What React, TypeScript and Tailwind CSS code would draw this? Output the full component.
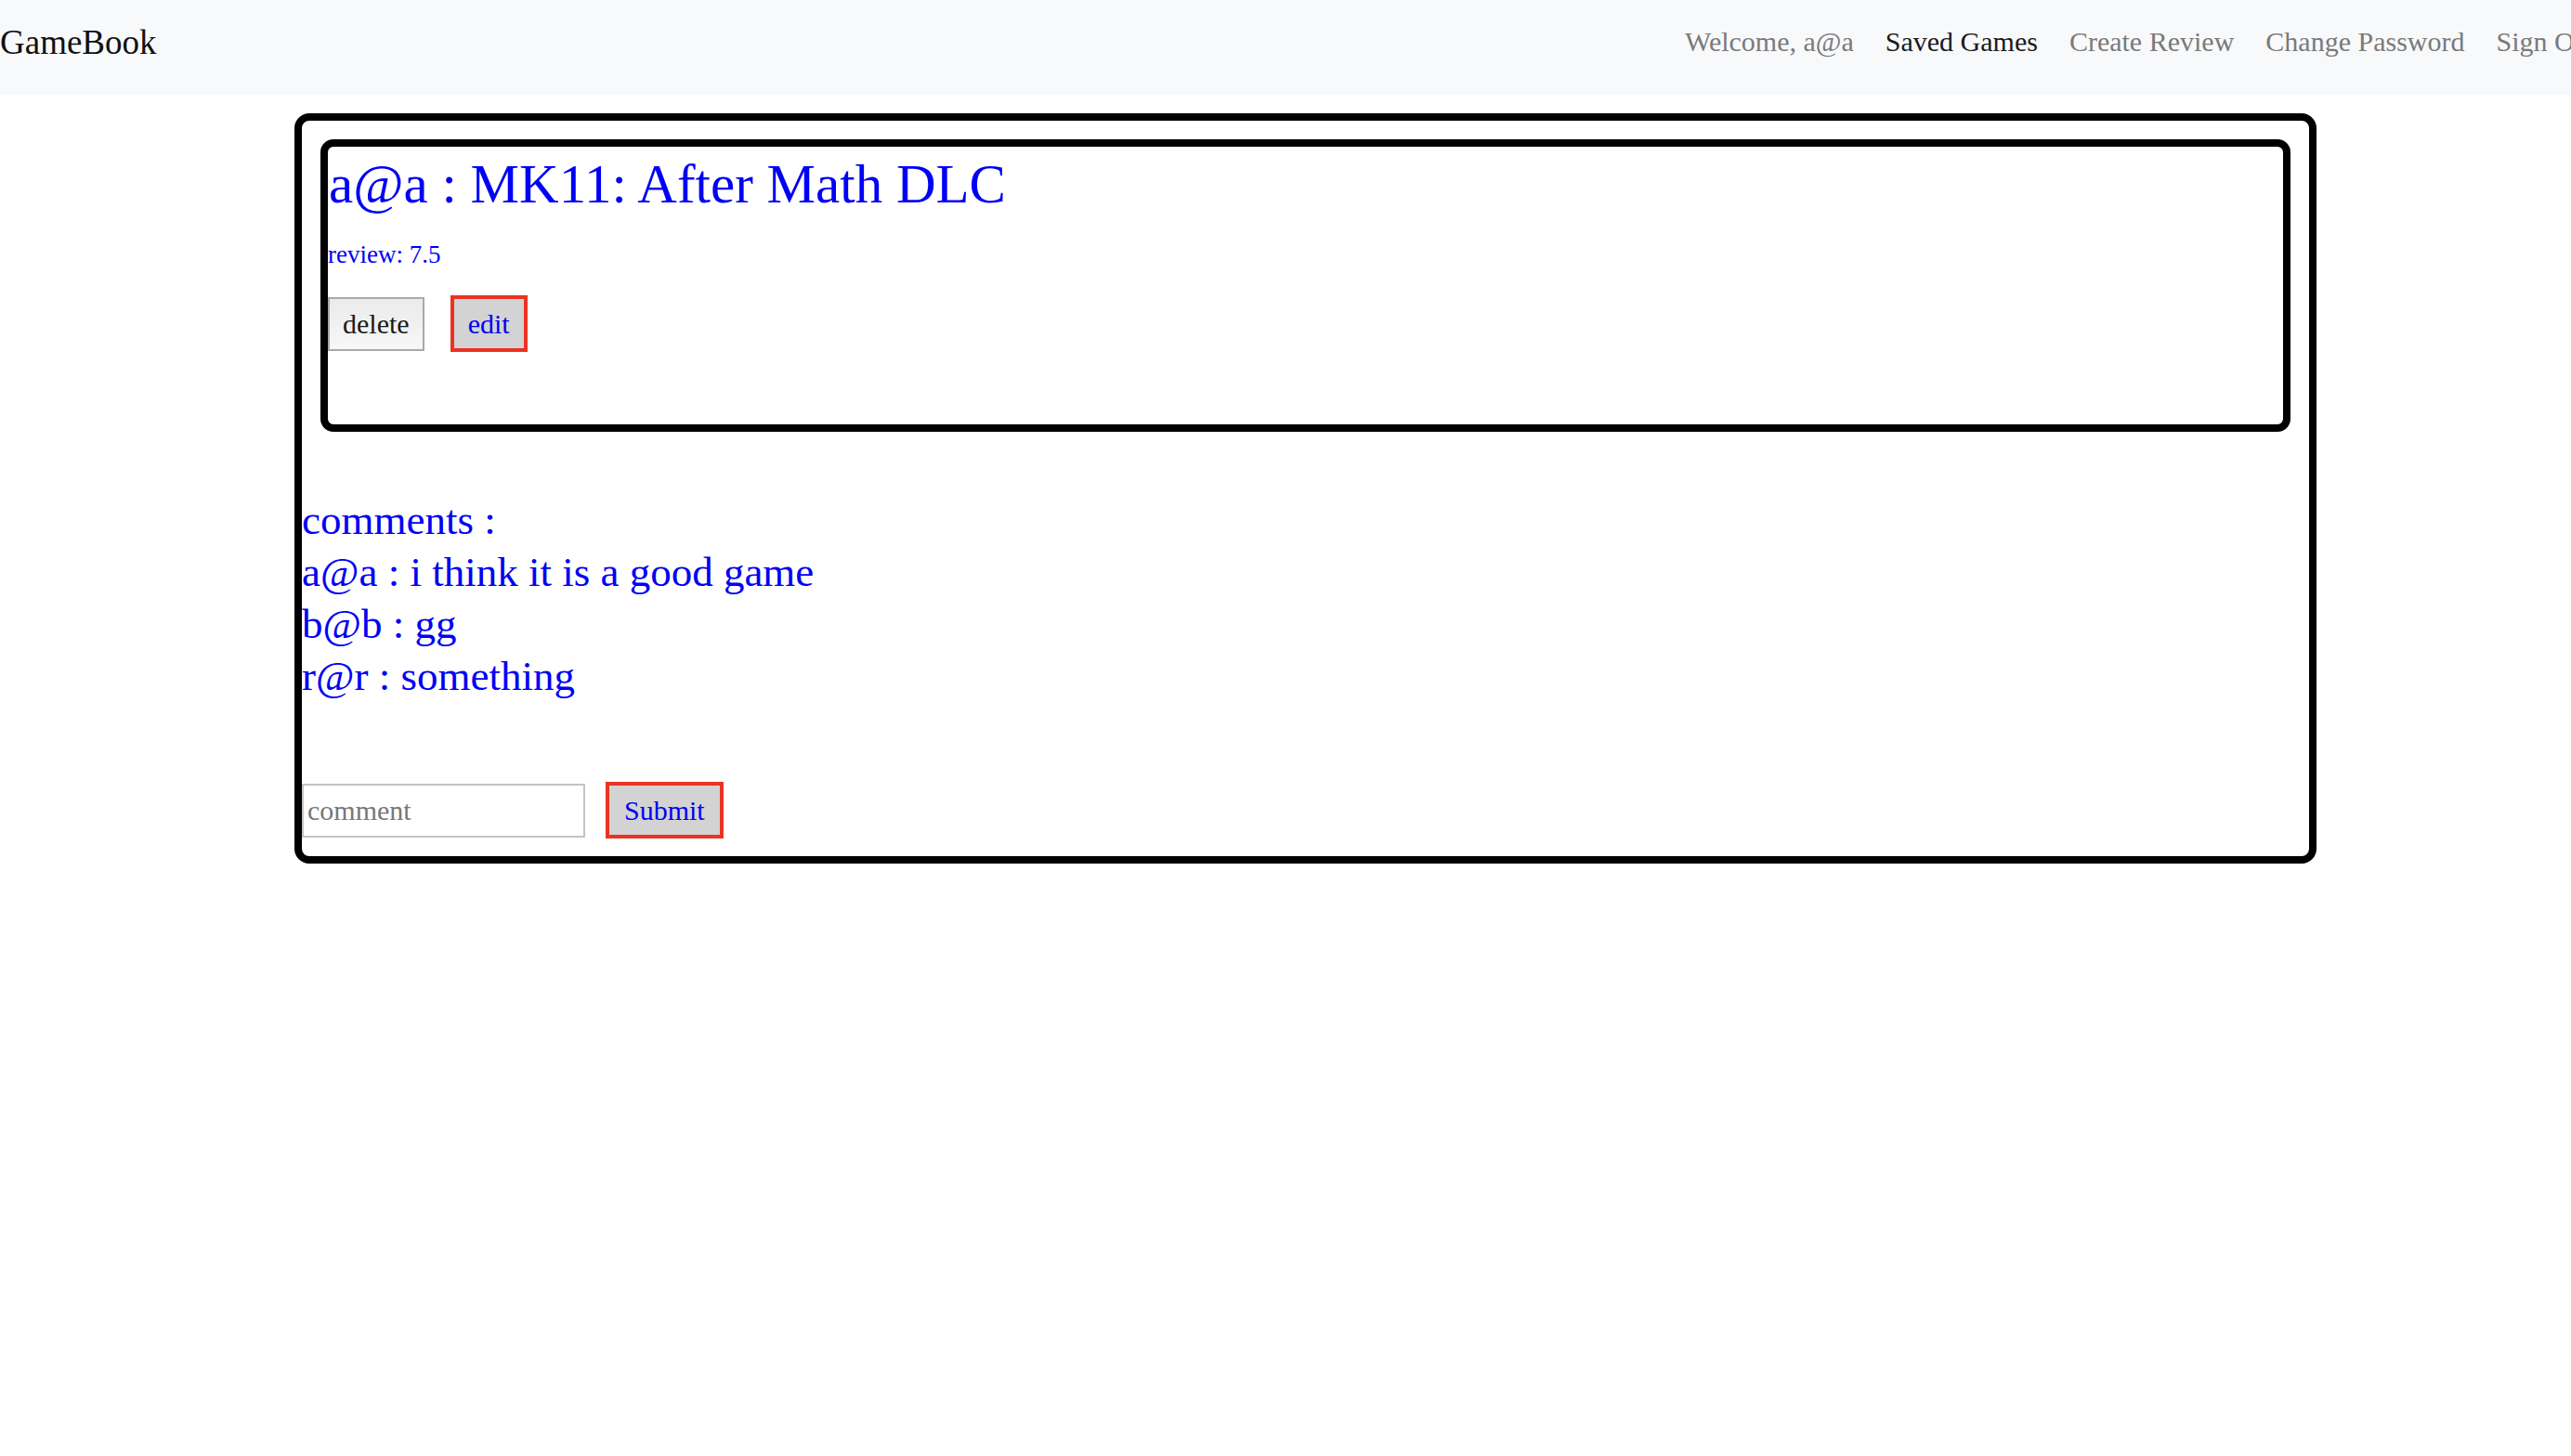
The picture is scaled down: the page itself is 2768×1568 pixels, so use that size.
import React from "react";

export default function App() {
  const comments = [
    "a@a : i think it is a good game",
    "b@b : gg",
    "r@r : something",
  ];
  return (
    <div className="min-h-screen w-full overflow-hidden bg-white font-['Liberation_Serif','Times_New_Roman',serif]">
      <nav className="h-[102px] w-[2812px] bg-[#f8f9fa] flex items-start">
        <div className="pt-[24px] text-[37px] leading-[44px] text-[#111]">GameBook</div>
        <div className="flex-1" />
        <ul className="flex pt-[28px] text-[30px] leading-[34px]">
          <li className="px-[17px] text-[#7a7a7a]">Welcome, a@a</li>
          <li className="px-[17px] text-[#1a1a1a]">Saved Games</li>
          <li className="px-[17px] text-[#7a7a7a]">Create Review</li>
          <li className="px-[17px] text-[#7a7a7a]">Change Password</li>
          <li className="px-[17px] text-[#7a7a7a]">Sign Out</li>
        </ul>
      </nav>

      <div className="mt-[20px] ml-[317px] w-[2177px] h-[808px] border-[8px] border-black rounded-[16px] flex flex-col">
        <div className="mt-[20px] mx-[20px] h-[315px] border-[8px] border-black rounded-[14px] text-[#0000f5]">
          <h1 className="mt-[5px] pl-[1px] text-[59px] leading-[70px]">a@a : MK11: After Math DLC</h1>
          <p className="mt-[25px] text-[27px] leading-[32px]">review: 7.5</p>
          <div className="mt-[28px] flex items-center gap-[28px]">
            <button className="h-[58px] px-[14px] border-2 border-[#a9a9a9] bg-gradient-to-b from-[#ebebeb] to-[#f7f7f7] text-[30px] leading-[34px] text-[#1a1a1a]">
              delete
            </button>
            <button className="h-[61px] px-[15px] border-4 border-[#ea3323] bg-[#d3d3d3] text-[30px] leading-[34px] text-[#0000f5]">
              edit
            </button>
          </div>
        </div>

        <div className="mt-[67px] text-[45px] leading-[56px] text-[#0000f5]">
          <div>comments :</div>
          {comments.map((c) => (
            <div key={c}>{c}</div>
          ))}
        </div>

        <div className="mt-[86px] flex items-center gap-[22px]">
          <input
            placeholder="comment"
            className="w-[305px] h-[58px] border-2 border-[#c4c4c4] bg-white px-[4px] text-[30px] text-[#222] placeholder:text-[#777] outline-none"
          />
          <button className="h-[61px] px-[16px] border-4 border-[#ea3323] bg-[#d3d3d3] text-[30px] leading-[34px] text-[#0000f5]">
            Submit
          </button>
        </div>
      </div>
    </div>
  );
}
